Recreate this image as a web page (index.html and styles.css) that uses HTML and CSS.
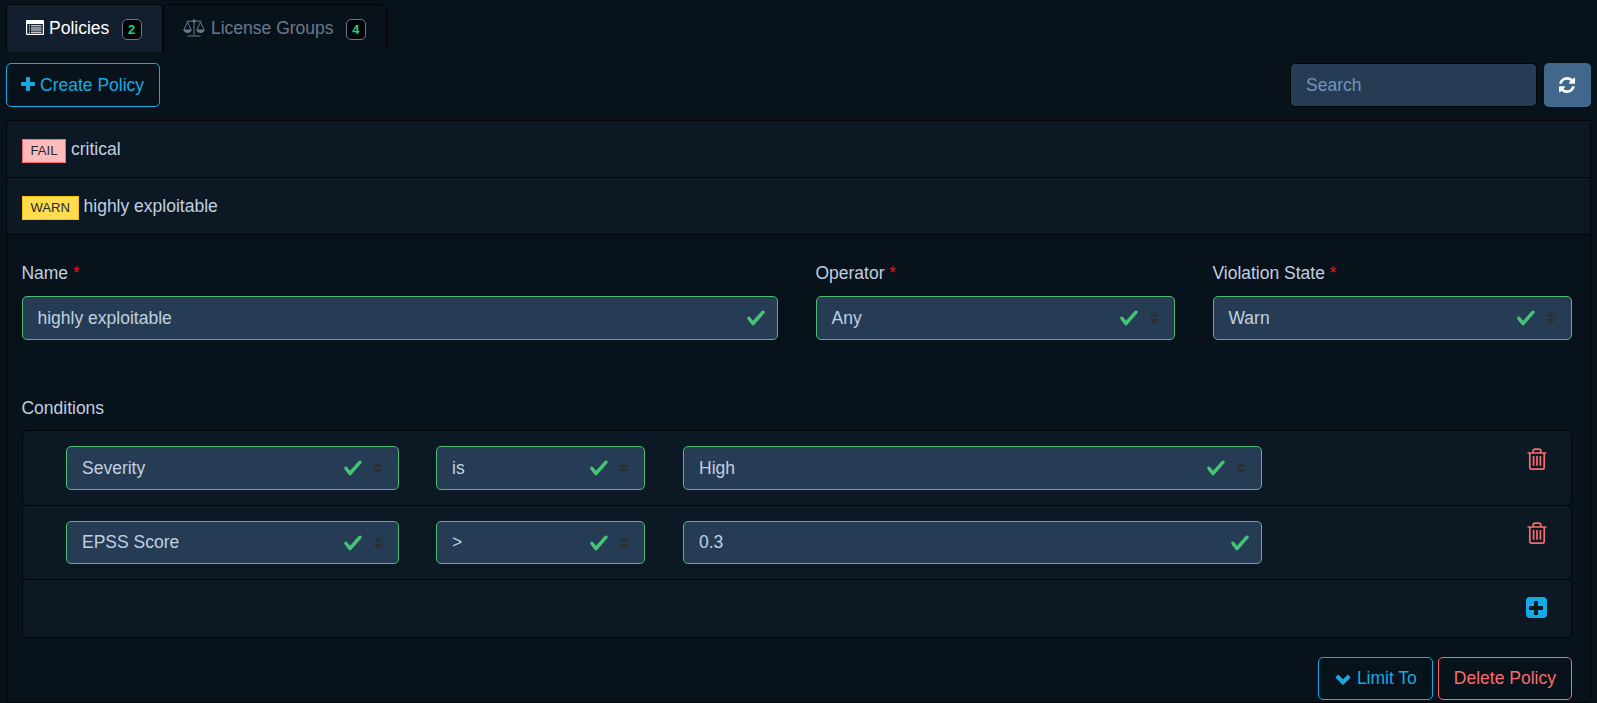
FILE: index.html
```html
<!DOCTYPE html>
<html lang="en">
<head>
<meta charset="UTF-8">
<title>Policy Management</title>
<link rel="stylesheet" href="styles.css">
</head>
<body>
<!-- shared icons -->
<svg class="sprite">
    <symbol id="check" viewBox="0 0 8 8"><path d="M2.3 6.73L.6 4.53c-.4-1.04.46-1.4 1.1-.8l1.1 1.4 3.4-3.8c.6-.63 1.6-.27 1.2.7l-4 4.6c-.43.5-.8.4-1.1.1z"/></symbol>
    <symbol id="sort" viewBox="0 0 10 12"><path d="M5 0L0 5h10zM5 12L0 7h10z"/></symbol>
    <symbol id="trash" viewBox="0 0 20 22"><path d="M.5 5h19M6.2 5V3q0-1.8 1.8-1.8h4q1.8 0 1.8 1.8v2M2.8 5v14.500q0 1.700 1.700 1.700h11q1.700 0 1.700-1.700V5M6.600 8v9.800M10 8v9.800M13.400 8v9.800"/></symbol>
    <symbol id="plus" viewBox="0 0 14 14"><path d="M6 0h2q1 0 1 1v4h4q1 0 1 1v2q0 1-1 1H9v4q0 1-1 1H6q-1 0-1-1V9H1Q0 9 0 8V6q0-1 1-1h4V1q0-1 1-1z"/></symbol>
</svg>

<ul class="nav-tabs">
    <li class="tab active">
        <svg class="tab-icon list-icon" viewBox="0 0 18 15"><path fill-rule="evenodd" d="M1 0h16q1 0 1 1v13q0 1-1 1H1q-1 0-1-1V1q0-1 1-1zm.2 4v9.800h15.600V4zM3 5.200h1v1H3zm2 0h10.500v1H5zM3 7.400h1v1H3zm2 0h10.500v1H5zM3 9.600h1v1H3zm2 0h10.500v1H5zM3 11.800h1v1H3zm2 0h10.500v1H5z"/></svg>
        <span>Policies</span> <span class="badge">2</span>
    </li>
    <li class="tab">
        <svg class="tab-icon scale-icon" viewBox="0 0 22 18"><path d="M3.500 2.200h15M11 1v15.500M4.500 17h13M4.500 3L.800 11h7.400zM17.500 3l-3.700 8h7.400z"/><path class="fill" d="M.3 11h8.400q-1.200 3-4.200 3T.3 11zM13.300 11h8.400q-1.200 3-4.200 3t-4.200-3z"/><circle cx="11" cy="2" r="1.300"/></svg>
        <span>License Groups</span> <span class="badge">4</span>
    </li>
</ul>

<div class="toolbar">
    <button class="btn btn-primary create"><svg class="plus-icon"><use href="#plus"/></svg> Create Policy</button>
    <div class="tools">
        <input class="search" type="text" placeholder="Search">
        <button class="refresh"><svg viewBox="0 0 1536 1536"><path d="M1511 928q0 5-1 7-64 268-268 434.500T764 1536q-146 0-282.500-55T238 1324l-129 129q-19 19-45 19t-45-19-19-45V960q0-26 19-45t45-19h448q26 0 45 19t19 45-19 45l-137 137q71 66 161 102t187 36q134 0 250-65t186-179q11-17 53-117 8-23 30-23h192q13 0 22.500 9.500t9.500 22.500zm25-800v448q0 26-19 45t-45 19h-448q-26 0-45-19t-19-45 19-45l138-138Q969 256 768 256q-134 0-250 65T332 500q-11 17-53 117-8 23-30 23H50q-13 0-22.500-9.500T18 608v-7q65-268 270-434.500T768 0q146 0 284 55.500T1297 212l130-129q19-19 45-19t45 19 19 45z"/></svg></button>
    </div>
</div>

<div class="policies">
    <div class="policy-row"><span class="state fail">FAIL</span> critical</div>
    <div class="policy-row"><span class="state warn">WARN</span> highly exploitable</div>
    <div class="detail">
        <div class="fields">
            <div>
                <label>Name <span class="required">*</span></label>
                <div class="control"><span>highly exploitable</span><svg class="check"><use href="#check"/></svg></div>
            </div>
            <div>
                <label>Operator <span class="required">*</span></label>
                <div class="control select"><span>Any</span><svg class="check"><use href="#check"/></svg><svg class="sort"><use href="#sort"/></svg></div>
            </div>
            <div>
                <label>Violation State <span class="required">*</span></label>
                <div class="control select"><span>Warn</span><svg class="check"><use href="#check"/></svg><svg class="sort"><use href="#sort"/></svg></div>
            </div>
        </div>

        <label class="conditions-label">Conditions</label>
        <div class="conditions">
            <div class="condition">
                <div class="control select"><span>Severity</span><svg class="check"><use href="#check"/></svg><svg class="sort"><use href="#sort"/></svg></div>
                <div class="control select"><span>is</span><svg class="check"><use href="#check"/></svg><svg class="sort"><use href="#sort"/></svg></div>
                <div class="control select"><span>High</span><svg class="check"><use href="#check"/></svg><svg class="sort"><use href="#sort"/></svg></div>
                <svg class="trash"><use href="#trash"/></svg>
            </div>
            <div class="condition">
                <div class="control select"><span>EPSS Score</span><svg class="check"><use href="#check"/></svg><svg class="sort"><use href="#sort"/></svg></div>
                <div class="control select"><span>&gt;</span><svg class="check"><use href="#check"/></svg><svg class="sort"><use href="#sort"/></svg></div>
                <div class="control"><span>0.3</span><svg class="check"><use href="#check"/></svg></div>
                <svg class="trash"><use href="#trash"/></svg>
            </div>
            <div class="add-condition">
                <span class="add"><svg class="plus-icon"><use href="#plus"/></svg></span>
            </div>
        </div>

        <div class="actions">
            <button class="btn btn-primary"><svg class="chevron" viewBox="0 0 16 11"><path d="M1.800 2l6.200 6.200L14.200 2"/></svg> Limit To</button>
            <button class="btn btn-danger">Delete Policy</button>
        </div>
    </div>
</div>
</body>
</html>
```
FILE: styles.css
```css
* {
    box-sizing: border-box;
}
body {
    margin: 0;
    height: 703px;
    padding: 4px 6px 0;
    overflow: hidden;
    background-color: #08121b;
    color: #c0d0e0;
    font-family: "Liberation Sans", Arial, sans-serif;
    font-size: 17.5px;
    line-height: 26.25px;
}
svg {
    flex: none;
    fill: currentColor;
}
.sprite {
    display: none;
}

/* tabs */
.nav-tabs {
    display: flex;
    margin: 0;
    padding: 0;
    list-style: none;
}
.tab {
    display: flex;
    align-items: center;
    width: 157px;
    height: 48px;
    padding: 0 0 2px 19px;
    border: 1px solid #010508;
    border-bottom: 0;
    border-radius: 5px 5px 0 0;
    color: #687a8c;
    white-space: nowrap;
}
.tab + .tab {
    width: 224px;
}
.tab.active {
    background-color: #131f2e;
    color: #fff;
}
.tab > span:not(.badge) {
    padding-top: 2px;
}
.tab-icon {
    margin-right: 5px;
}
.list-icon {
    width: 18px;
    height: 15px;
}
.scale-icon {
    width: 22px;
    height: 18px;
    margin-right: 6px;
    fill: none;
    stroke: currentColor;
}
.scale-icon .fill {
    fill: currentColor;
    stroke: none;
}
.badge {
    width: 20px;
    height: 21px;
    margin: 4px 0 0 12.4px;
    border: 1px solid #687a8c;
    border-radius: 5px;
    background-color: #010508;
    color: #20d080;
    font-size: 13px;
    font-weight: bold;
    line-height: 20px;
    text-align: center;
}

/* toolbar */
.toolbar {
    display: flex;
    justify-content: space-between;
    margin: 11px 0 13px;
}
.btn {
    display: flex;
    align-items: center;
    gap: 5px;
    height: 44px;
    padding: 0 15px;
    border: 1px solid;
    border-radius: 5px;
    background: none;
    font: inherit;
    white-space: nowrap;
}
.btn-primary {
    border-color: #17aae2;
    color: #17aae2;
}
.btn-danger {
    border-color: #f86c6b;
    color: #f86c6b;
}
.plus-icon {
    width: 14px;
    height: 14px;
}
.create {
    padding: 0 15px 0 14px;
}
.create .plus-icon {
    margin-top: -2px;
}
.tools {
    display: flex;
    gap: 7px;
}
.search {
    width: 247px;
    height: 44px;
    padding: 0 15px;
    border: 1px solid #010508;
    border-radius: 5px;
    background-color: #263c54;
    color: #c0d0e0;
    font: inherit;
}
.search::placeholder {
    color: #7294bb;
}
.refresh {
    display: flex;
    align-items: center;
    justify-content: center;
    width: 47px;
    height: 44px;
    padding: 0 1px 1px 0;
    border: 0;
    border-radius: 5px;
    background-color: #41678d;
    color: #fff;
}
.refresh svg {
    width: 16px;
    height: 16px;
}

/* policy list */
.policies {
    height: 583px;
    border: 1px solid #010508;
    width: 1585px;
}
.policy-row {
    display: flex;
    height: 57px;
    padding: 15px 15px 0;
    gap: 5px;
    border-bottom: 1px solid #010508;
    background-color: #0c1925;
}
.state {
    height: 24px;
    margin-top: 3px;
    padding: 0 7.5px;
    border: 1px solid;
    color: #23282c;
    font-size: 13.1px;
    line-height: 22px;
}
.fail {
    border-color: #f86c6b;
    background-color: #ffbaba;
}
.warn {
    border-color: #ffc107;
    background-color: #ffdc50;
}
.detail {
    padding: 25px 18px 0 15px;
}
label {
    display: block;
    height: 36px;
    margin-left: -0.6px;
}
.conditions-label {
    height: 35px;
}
.required {
    color: #d81e1e;
}
.fields {
    display: grid;
    grid-template-columns: 756px 359px 359px;
    column-gap: 38px;
    margin-bottom: 55px;
}
.control {
    display: flex;
    align-items: center;
    height: 44px;
    padding: 0 11px 0 15px;
    border: 1px solid #4dbd74;
    border-radius: 5px;
    background-color: #263c54;
}
.fields .control {
    padding-left: 14.5px;
}
.control span {
    flex: 1;
}
.control.select {
    padding-right: 15px;
}
.check {
    width: 20px;
    height: 22px;
    fill: #45c475;
}
.sort {
    width: 10px;
    height: 12px;
    margin-left: 10.5px;
    fill: #2b3035;
}

/* conditions */
.condition {
    display: grid;
    grid-template-columns: 333px 209px 579px 1fr;
    column-gap: 37px;
    height: 75px;
    padding: 15px 24px 0 43px;
    border: 1px solid #010508;
    border-bottom: 0;
    border-radius: 5px;
    background-color: #0c1925;
}
.condition .control:nth-child(3) {
    margin: 0 -1px 0 1px;
}
.condition + .condition {
    height: 74px;
}
.condition + .condition .control {
    height: 43px;
}
.trash {
    justify-self: end;
    width: 20px;
    height: 22px;
    margin-top: 1.5px;
    fill: none;
    stroke: #f86c6b;
    stroke-width: 1.7;
}
.condition + .condition .trash {
    margin-top: 0.5px;
}
.add-condition {
    display: flex;
    justify-content: flex-end;
    height: 59px;
    padding: 17px 24.5px 0 0;
    border: 1px solid #010508;
    border-radius: 0 0 5px 5px;
    background-color: #0c1925;
}
.add {
    display: flex;
    align-items: center;
    justify-content: center;
    width: 21px;
    height: 21px;
    border-radius: 4px;
    background-color: #17aae2;
    color: #0c1925;
}
.actions {
    display: flex;
    justify-content: flex-end;
    gap: 5px;
    margin-top: 19px;
}
.actions .btn {
    height: 43px;
}
.actions .btn-primary {
    padding-left: 16px;
    gap: 6px;
}
.chevron {
    width: 16px;
    height: 11px;
    margin-top: 1px;
    fill: none;
    stroke: currentColor;
    stroke-width: 4;
}
```
